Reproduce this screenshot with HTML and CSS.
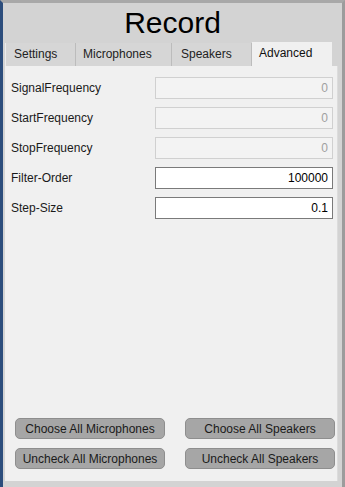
FILE: index.html
```html
<!DOCTYPE html>
<html lang="en">
<head>
  <meta charset="UTF-8">
  <title>Record</title>
  <link rel="stylesheet" href="styles.css">
</head>
<body>
  <div class="window">
    <h1 class="title">Record</h1>

    <div class="tabs">
      <div class="tab tab-settings">Settings</div>
      <div class="tab tab-mics">Microphones</div>
      <div class="tab tab-speakers">Speakers</div>
      <div class="tab tab-advanced active">Advanced</div>
    </div>

    <div class="panel">
      <div class="fields">
        <div class="row">
          <label>SignalFrequency</label>
          <input type="text" value="0" disabled>
        </div>
        <div class="row">
          <label>StartFrequency</label>
          <input type="text" value="0" disabled>
        </div>
        <div class="row">
          <label>StopFrequency</label>
          <input type="text" value="0" disabled>
        </div>
        <div class="row">
          <label>Filter-Order</label>
          <input type="text" value="100000">
        </div>
        <div class="row">
          <label>Step-Size</label>
          <input type="text" value="0.1">
        </div>
      </div>

      <div class="buttons">
        <button>Choose All Microphones</button>
        <button>Choose All Speakers</button>
        <button>Uncheck All Microphones</button>
        <button>Uncheck All Speakers</button>
      </div>
    </div>
  </div>
</body>
</html>
```

FILE: styles.css
```css
html, body {
  margin: 0;
  padding: 0;
}
body {
  font-family: "Liberation Sans", Arial, sans-serif;
  font-size: 12px;
  color: #1a1a1a;
}
.window {
  box-sizing: border-box;
  width: 345px;
  height: 487px;
  display: flex;
  flex-direction: column;
  background: #d3d3d3;
  border-left: 3px solid #2c4d7c;
  border-top: 3px solid #a8a8a8;
  border-right: 3px solid #9c9c9c;
}
.title {
  height: 39px;
  margin: 0;
  font-size: 30px;
  font-weight: normal;
  line-height: 39px;
  text-align: center;
  color: #000;
}
.tabs {
  display: flex;
  align-items: flex-end;
  height: 24px;
  margin-left: 2px;
}
.tab {
  box-sizing: border-box;
  height: 23px;
  padding-left: 7px;
  line-height: 22px;
  background: #d6d6d6;
  border-right: 1px solid #bcbcbc;
  color: #222;
}
.tab-settings { width: 71px; padding-left: 8px; border-left: 1px solid #ececec; }
.tab-mics { width: 96px; }
.tab-speakers { width: 80px; padding-left: 9px; }
.tab-advanced { width: 80px; }
.tab.active {
  height: 24px;
  background: #f0f0f0;
  border-right: none;
  color: #111;
}
.panel {
  flex: 1;
  display: flex;
  flex-direction: column;
  justify-content: space-between;
  margin: 0 4px 6px 2px;
  padding: 11px 0 12px 0;
  background: #f0f0f0;
  border-right: 1px solid #dcdcdc;
}
.fields {
  display: flex;
  flex-direction: column;
  gap: 8px;
  padding-left: 6px;
}
.row {
  display: flex;
  align-items: center;
  height: 22px;
}
.row label {
  width: 144px;
}
.row input {
  box-sizing: border-box;
  width: 178px;
  height: 22px;
  padding: 0 4px;
  font-family: inherit;
  font-size: 12px;
  text-align: right;
  color: #000;
  background: #fff;
  border: 1px solid #7a7a7a;
  border-radius: 0;
  outline: none;
}
.row input:disabled {
  color: #a0a0a0;
  background: #f3f3f3;
  border-color: #d0d0d0;
}
.buttons {
  display: grid;
  grid-template-columns: 150px 150px;
  column-gap: 20px;
  row-gap: 9px;
  padding-left: 10px;
}
.buttons button {
  height: 21px;
  padding: 0;
  font-family: inherit;
  font-size: 12px;
  color: #1a1a1a;
  background: #a6a6a6;
  border: 1px solid #8e8e8e;
  border-radius: 5px;
  cursor: pointer;
}
```
